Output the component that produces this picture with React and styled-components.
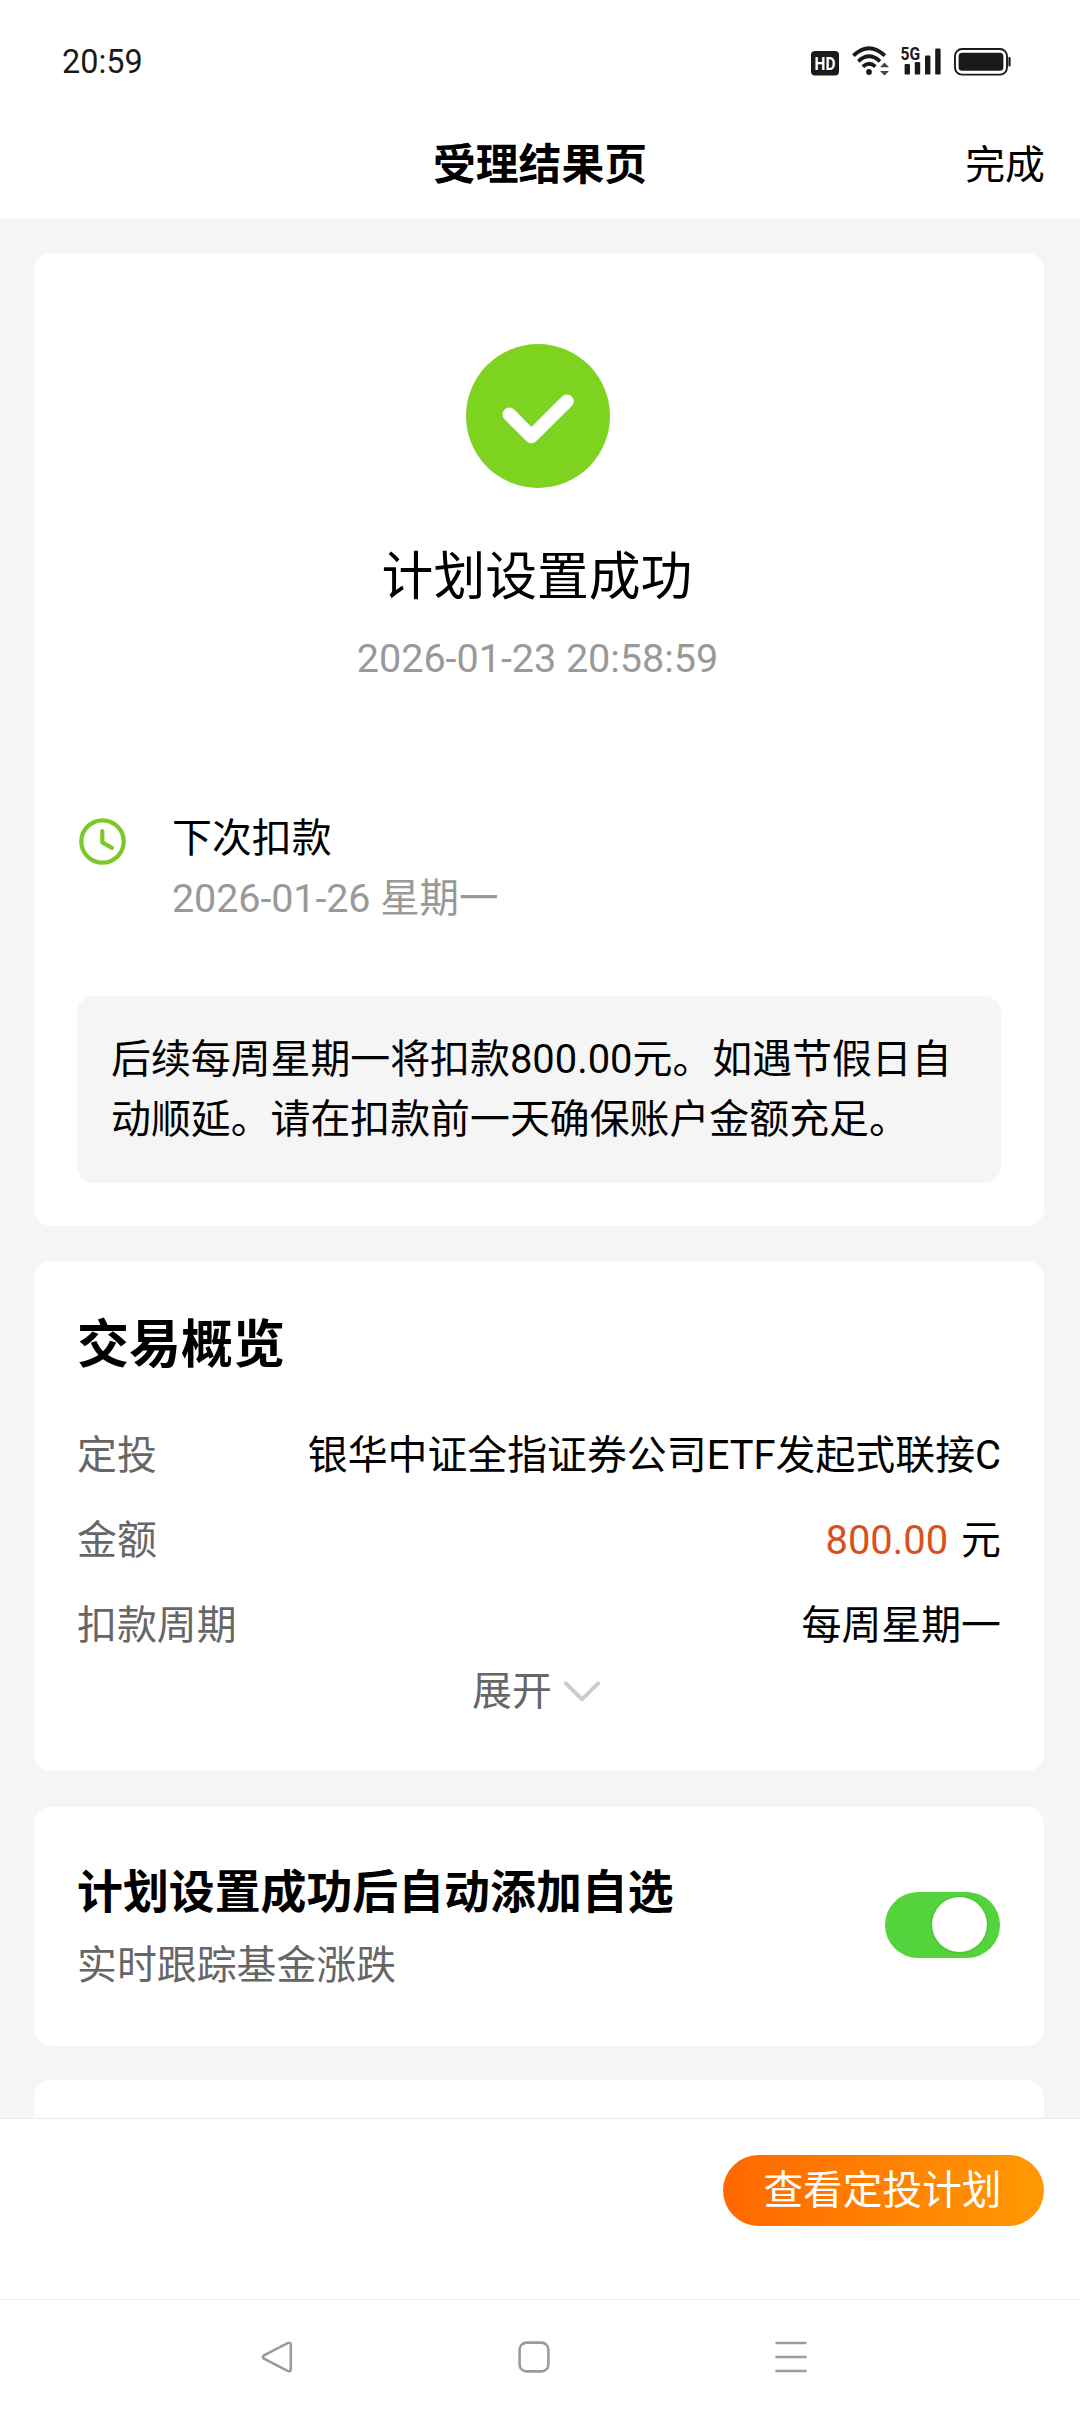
import { useState } from "react";
import styled, { createGlobalStyle } from "styled-components";

const details = [
  { label: "定投", value: "银华中证全指证券公司ETF发起式联接C" },
  { label: "金额", amount: "800.00", value: "元" },
  { label: "扣款周期", value: "每周星期一" },
];

const App = () => {
  const [autoAdd, setAutoAdd] = useState(true);

  return (
    <>
      <GlobalStyle />
      <Screen>
        <StatusBar>
          <Clock>20:59</Clock>
          <StatusIcons>
            <HdIcon />
            <WifiIcon />
            <SignalIcon />
            <BatteryIcon />
          </StatusIcons>
        </StatusBar>

        <Header>
          <PageTitle>受理结果页</PageTitle>
          <DoneButton>完成</DoneButton>
        </Header>

        <Content>
          <ResultCard>
            <SuccessIcon />
            <ResultTitle>计划设置成功</ResultTitle>
            <ResultTime>2026-01-23 20:58:59</ResultTime>
            <NextPayment>
              <ClockIcon />
              <div>
                <Line>下次扣款</Line>
                <Line $muted>2026-01-26 星期一</Line>
              </div>
            </NextPayment>
            <Notice>
              后续每周星期一将扣款800.00元。如遇节假日自动顺延。请在扣款前一天确保账户金额充足。
            </Notice>
          </ResultCard>

          <OverviewCard>
            <CardTitle>交易概览</CardTitle>
            {details.map((item) => (
              <DetailRow key={item.label}>
                <DetailLabel>{item.label}</DetailLabel>
                <DetailValue>
                  {item.amount && <Amount>{item.amount}</Amount>}
                  {item.value}
                </DetailValue>
              </DetailRow>
            ))}
            <ExpandButton>
              展开
              <ChevronIcon />
            </ExpandButton>
          </OverviewCard>

          <AutoAddCard>
            <div>
              <AutoAddTitle>计划设置成功后自动添加自选</AutoAddTitle>
              <AutoAddDesc>实时跟踪基金涨跌</AutoAddDesc>
            </div>
            <Toggle
              role="switch"
              aria-checked={autoAdd}
              $on={autoAdd}
              onClick={() => setAutoAdd(!autoAdd)}
            >
              <Knob />
            </Toggle>
          </AutoAddCard>

          <NextCard />
        </Content>

        <Footer>
          <PlanButton>查看定投计划</PlanButton>
        </Footer>

        <SystemNav>
          <NavIcon viewBox="0 0 32 32">
            <path d="M26.6 2.1 L3 14.3 Q0.9 16 3 17.7 L26.6 29.9 Q29.6 31.2 29.8 28.4 L29.8 3.6 Q29.6 0.8 26.6 2.1 Z" />
          </NavIcon>
          <NavIcon viewBox="0 0 32 32">
            <rect x="1.6" y="1.6" width="28.8" height="28.8" rx="7" />
          </NavIcon>
          <NavIcon viewBox="0 0 32 32">
            <path d="M0.5 2 H31.5 M0.5 16 H31.5 M0.5 30 H31.5" />
          </NavIcon>
        </SystemNav>
      </Screen>
    </>
  );
};
export default App;

const HdIcon = () => (
  <Hd width="28" height="25" viewBox="0 0 28 25">
    <rect width="28" height="24.6" rx="4" />
    <text x="3.6" y="19" textLength="20.8" lengthAdjust="spacingAndGlyphs">
      HD
    </text>
  </Hd>
);

const WifiIcon = () => (
  <Wifi width="38" height="30" viewBox="0 0 38 30">
    <g fill="none" stroke="#1a1a1a" strokeWidth="3.8">
      <path d="M1.4 9.6 Q17 -5.2 32.8 9.6" />
      <path d="M6.3 15.3 Q17 5.4 28 15.3" />
      <path d="M10.8 20.6 Q17 14.8 23.4 20.6" />
    </g>
    <circle cx="17" cy="26" r="2.9" fill="#1a1a1a" />
    <path d="M28 21.2 L32.5 16.6 L37 21.2 Z M28 25 L32.5 29.6 L37 25 Z" fill="#444" />
  </Wifi>
);

const SignalIcon = () => (
  <Signal width="41" height="30" viewBox="0 0 41 30">
    <text x="-0.4" y="13.6" textLength="19.6" lengthAdjust="spacingAndGlyphs">
      5G
    </text>
    <rect x="3.6" y="18" width="5.4" height="10.6" rx="1.2" />
    <rect x="13.8" y="16" width="5.4" height="12.6" rx="1.2" />
    <rect x="24" y="9.6" width="5.4" height="19" rx="1.2" />
    <rect x="34.2" y="2.6" width="5.4" height="26" rx="1.2" />
  </Signal>
);

const BatteryIcon = () => (
  <svg width="57" height="28" viewBox="0 0 57 28">
    <rect x="1" y="1" width="52" height="25.6" rx="7" fill="none" stroke="#1a1a1a" strokeWidth="1.9" />
    <rect x="4.6" y="4.8" width="44.8" height="18" rx="3.6" fill="#1a1a1a" />
    <rect x="54.4" y="9" width="2.2" height="9.6" rx="1" fill="#1a1a1a" />
  </svg>
);

const SuccessIcon = () => (
  <Success width="144" height="144" viewBox="0 0 144 144">
    <circle cx="72" cy="72" r="72" fill="#7ed321" />
    <path
      d="M43.3 70.4 L65.4 92.5 L101 57.2"
      fill="none"
      stroke="#fff"
      strokeWidth="13.6"
      strokeLinecap="round"
      strokeLinejoin="round"
    />
  </Success>
);

const ClockIcon = () => (
  <ClockSvg width="47" height="47" viewBox="0 0 47 47">
    <circle cx="23.5" cy="23.5" r="21.2" />
    <path d="M23.3 13 V24.4 L33 29.8" />
  </ClockSvg>
);

const ChevronIcon = () => (
  <Chevron width="36" height="22" viewBox="0 0 36 22">
    <path d="M2 2.4 L18 18.4 L34 2.4" />
  </Chevron>
);

const GlobalStyle = createGlobalStyle`
  * {
    box-sizing: border-box;
  }

  body {
    margin: 0;
    background: #fff;
    color: #000;
    font-family: Roboto, "Noto Sans CJK SC", sans-serif;
    font-size: 39.9px;
  }

  svg {
    display: block;
    flex: none;
  }

  button {
    border: none;
    padding: 0;
    background: none;
    color: inherit;
    font: inherit;
  }
`;

const Screen = styled.div`
  display: flex;
  flex-direction: column;
  width: 1080px;
  height: 2412px;
  overflow: hidden;
`;

const StatusBar = styled.div`
  display: flex;
  justify-content: space-between;
  height: 110px;
  padding: 0 69px 0 62px;
`;

const Clock = styled.span`
  margin-top: 42px;
  color: #1a1a1a;
  font-size: 32.4px;
  line-height: 40px;
`;

const StatusIcons = styled.div`
  display: flex;
  align-items: flex-start;
  padding-top: 48px;
`;

const Hd = styled.svg`
  margin: 3px 13px 0 0;
  fill: #1a1a1a;

  text {
    fill: #fff;
    font-size: 19px;
    font-weight: 700;
  }
`;

const Wifi = styled.svg`
  margin: -2px 11px 0 0;
`;

const Signal = styled.svg`
  margin: -2px 12px 0 0;
  fill: #1a1a1a;
  overflow: visible;

  text {
    font-size: 17.6px;
    font-weight: 700;
  }
`;

const Header = styled.header`
  display: grid;
  grid-template-columns: 1fr auto 1fr;
  align-items: center;
  height: 109px;
  padding-right: 36px;
`;

const PageTitle = styled.h1`
  grid-column: 2;
  margin: 0 -36px 0 0;
  font-size: 42.8px;
  font-weight: 700;
  line-height: 60px;
`;

const DoneButton = styled.button`
  justify-self: end;
  margin: 3px -1px 0 0;
  line-height: 60px;
`;

const Content = styled.main`
  flex: 1;
  display: flex;
  flex-direction: column;
  min-height: 0;
  padding: 34px 36px 0 34px;
  background: #f5f5f5;
  overflow: hidden;
`;

const Card = styled.section`
  flex: none;
  border-radius: 17px;
  background: #fff;
`;

const ResultCard = styled(Card)`
  display: flex;
  flex-direction: column;
  height: 973px;
  padding: 91px 43px 0;
`;

const Success = styled.svg`
  align-self: center;
  margin-right: 2px;
`;

const ResultTitle = styled.h2`
  margin: 60px 4px 0 0;
  font-size: 51.8px;
  font-weight: 400;
  line-height: 60px;
  text-align: center;
`;

const ResultTime = styled.p`
  margin: 21px 3px 0 0;
  color: #999;
  font-size: 39.6px;
  line-height: 60px;
  letter-spacing: -0.05px;
  text-align: center;
`;

const NextPayment = styled.div`
  display: flex;
  gap: 46px;
  margin-top: 120px;
  padding-left: 2px;
`;

const ClockSvg = styled.svg`
  margin-top: 9px;
  fill: none;
  stroke: #7ac928;
  stroke-width: 4.2;
  stroke-linecap: round;
  stroke-linejoin: round;
`;

const Line = styled.p`
  margin: 0;
  color: ${(props) => (props.$muted ? "#999" : "#000")};
  font-size: ${(props) => (props.$muted ? "39.5px" : "39.9px")};
  line-height: 59.5px;
  letter-spacing: ${(props) => (props.$muted ? "-0.1px" : "normal")};
`;

const Notice = styled.p`
  margin: 68px 0 0;
  padding: 34px;
  border-radius: 17px;
  background: #f5f5f5;
  line-height: 59.5px;
`;

const OverviewCard = styled(Card)`
  display: flex;
  flex-direction: column;
  height: 510px;
  margin-top: 35px;
  padding: 55px 43px 0;
`;

const CardTitle = styled.h3`
  margin: 0 0 37px;
  font-size: 52px;
  font-weight: 700;
  line-height: 60px;
`;

const DetailRow = styled.div`
  display: flex;
  justify-content: space-between;
  line-height: 85px;
`;

const DetailLabel = styled.span`
  color: #666;
`;

const DetailValue = styled.span`
  color: #000;
`;

const Amount = styled.span`
  margin-right: 13px;
  color: #d9501c;
`;

const ExpandButton = styled.button`
  display: flex;
  align-items: center;
  justify-content: center;
  gap: 12px;
  margin: -1px 6px 0 0;
  color: #666;
  line-height: 50px;
`;

const Chevron = styled.svg`
  fill: none;
  stroke: #ccc;
  stroke-width: 4;
  stroke-linecap: round;
  stroke-linejoin: round;
`;

const AutoAddCard = styled(Card)`
  display: flex;
  justify-content: space-between;
  align-items: flex-start;
  height: 239px;
  margin-top: 36px;
  padding: 55px 44px 0 43px;
`;

const AutoAddTitle = styled.h3`
  margin: 0;
  font-size: 45.9px;
  font-weight: 700;
  line-height: 60px;
`;

const AutoAddDesc = styled.p`
  margin: 14px 0 0;
  color: #666;
  line-height: 60px;
`;

const Toggle = styled.button`
  display: flex;
  justify-content: ${(props) => (props.$on ? "flex-end" : "flex-start")};
  width: 115px;
  height: 66px;
  margin-top: 30px;
  padding: 5px 13px 0;
  border-radius: 33px;
  background: ${(props) => (props.$on ? "#53d43d" : "#ddd")};
`;

const Knob = styled.span`
  width: 55px;
  height: 55px;
  border-radius: 50%;
  background: #fff;
  box-shadow: 0 0 3px rgba(0, 0, 0, 0.25);
`;

const NextCard = styled(Card)`
  height: 200px;
  margin-top: 34px;
`;

const Footer = styled.footer`
  display: flex;
  justify-content: flex-end;
  align-items: flex-start;
  height: 181px;
  padding: 36px 36px 0;
  border-top: 1px solid #ebebeb;
  background: #fff;
`;

const PlanButton = styled.button`
  width: 321px;
  height: 71px;
  padding: 0 2px 0 0;
  border-radius: 36px;
  background: linear-gradient(90deg, #ff6800, #ff9904);
  color: #fff;
  font-size: 39.7px;
  line-height: 71px;
`;

const SystemNav = styled.nav`
  display: flex;
  justify-content: space-between;
  height: 113px;
  padding: 41px 273px 0 261px;
  border-top: 1px solid #f2f2f2;
`;

const NavIcon = styled.svg`
  width: 32px;
  height: 32px;
  fill: none;
  stroke: #9b9b9b;
  stroke-width: 2.6;
`;
